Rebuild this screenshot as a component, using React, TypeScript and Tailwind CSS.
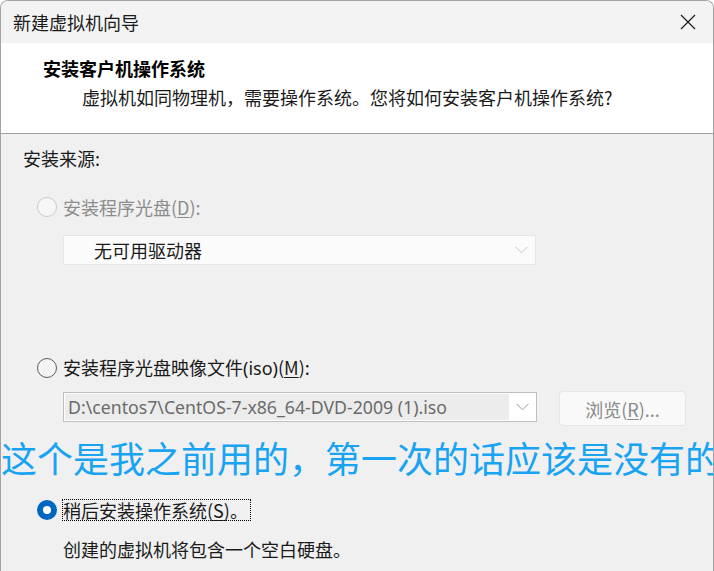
import React from "react";

const cjk = { fontFamily: '"Noto Sans CJK SC", "Noto Sans", sans-serif' };
const latin = { fontFamily: '"Noto Sans", "Noto Sans CJK SC", sans-serif' };

function Chevron({ color }: { color: string }) {
  return (
    <svg width="13" height="8" viewBox="0 0 13 8" fill="none">
      <path d="M0.5 0.8 L6.5 6.8 L12.5 0.8" stroke={color} strokeWidth="1" />
    </svg>
  );
}

function Radio({ state }: { state: "disabled" | "off" | "on" }) {
  if (state === "on") {
    return (
      <span className="flex h-[20px] w-[20px] shrink-0 items-center justify-center rounded-full bg-[#0067c0]">
        <span className="h-[8px] w-[8px] rounded-full bg-white" />
      </span>
    );
  }
  return (
    <span
      className={
        state === "disabled"
          ? "h-[20px] w-[20px] shrink-0 rounded-full border-[1.5px] border-[#c9c9c9] bg-[#f6f6f6]"
          : "h-[20px] w-[20px] shrink-0 rounded-full border-[1.5px] border-[#5c5c5c] bg-[#f3f3f3]"
      }
    />
  );
}

export default function App() {
  return (
    <div className="h-[571px] w-[714px] overflow-hidden bg-white" style={cjk}>
      <div className="flex h-full flex-col overflow-hidden rounded-t-[8px] border-x border-t border-[#a3a3a3]">
        {/* title bar */}
        <div className="flex h-[42px] shrink-0 items-center justify-between bg-[#f3f3f3] pl-[12px] pr-[17px]">
          <span className="text-[18px] leading-[24px] text-[#1a1a1a]">新建虚拟机向导</span>
          <svg width="16" height="16" viewBox="0 0 16 16">
            <path d="M1 1 L15 15 M15 1 L1 15" stroke="#1a1a1a" strokeWidth="1.2" />
          </svg>
        </div>

        {/* header */}
        <div className="h-[91px] shrink-0 border-b border-[#a0a0a0] bg-white pl-[42px] pt-[13px]">
          <div className="text-[18px] font-bold leading-[24px] text-black">安装客户机操作系统</div>
          <div className="ml-[39px] mt-[5px] text-[18px] leading-[24px] text-[#1a1a1a]">
            虚拟机如同物理机，需要操作系统。您将如何安装客户机操作系统?
          </div>
        </div>

        {/* body */}
        <div className="flex-1 bg-[#f0f0f0] pl-[22px] pt-[12px] text-[18px] leading-[24px] text-[#1a1a1a]">
          <div>安装来源:</div>

          <div className="ml-[14px] mt-[25px] flex items-center gap-[6px] text-[#8c8c8c]">
            <Radio state="disabled" />
            <span>
              安装程序光盘(<span className="underline underline-offset-2">D</span>):
            </span>
          </div>

          <div className="ml-[40px] mt-[16px] flex h-[30px] w-[473px] items-center justify-between border border-[#e6e6e6] bg-[#fbfbfb] pl-[30px] pr-[7px]">
            <span className="text-[#1a1a1a]">无可用驱动器</span>
            <Chevron color="#c4c4c4" />
          </div>

          <div className="ml-[14px] mt-[90px] flex items-center gap-[6px]">
            <Radio state="off" />
            <span>
              安装程序光盘映像文件<span style={latin}>(iso)</span>(<span className="underline underline-offset-2">M</span>):
            </span>
          </div>

          <div className="ml-[40px] mt-[11px] flex items-start gap-[22px]">
            <div className="mt-[1px] flex h-[30px] w-[474px] items-stretch border border-[#bfbfbf] bg-white p-[1px]">
              <div
                className="flex w-[444px] items-center bg-[#ececec] pl-[3px] text-[17.7px] text-[#6b6b6b]"
                style={latin}
              >
                {"D:\\centos7\\CentOS-7-x86_64-DVD-2009 (1).iso"}
              </div>
              <div className="flex flex-1 items-center justify-center">
                <Chevron color="#9a9a9a" />
              </div>
            </div>
            <div className="flex h-[35px] w-[127px] items-center justify-center rounded-[4px] border border-[#e6e6e6] bg-[#f9f9f9] text-[#8a8a8a]">
              浏览(<span className="underline underline-offset-2">R</span>)...
            </div>
          </div>

          <div className="-ml-[22px] mt-[13px] whitespace-nowrap text-[36px] leading-[36px] text-[#18a4f2]">
            这个是我之前用的，第一次的话应该是没有的
          </div>

          <div className="ml-[14px] mt-[24px] flex items-center gap-[5px]">
            <Radio state="on" />
            <span className="h-[22px] border border-dotted border-black pr-[2px] leading-[20px]">
              稍后安装操作系统(<span className="underline underline-offset-2">S</span>)。
            </span>
          </div>

          <div className="ml-[40px] mt-[16px]">创建的虚拟机将包含一个空白硬盘。</div>
        </div>
      </div>
    </div>
  );
}
